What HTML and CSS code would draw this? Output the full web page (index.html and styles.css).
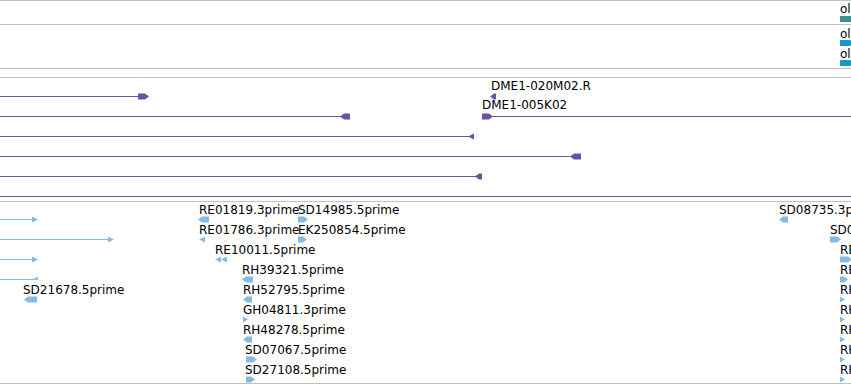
FILE: index.html
```html
<!DOCTYPE html>
<html lang="en">
  <head>
    <meta charset="UTF-8" />
    <meta name="viewport" content="width=device-width, initial-scale=1.0" />
    <title>Tracks</title>
    <link rel="stylesheet" href="styles.css">
  </head>
  <body>
    <div class="track-panel">
      <div class="track track-oligo" id="track-oligo"></div>
      <div class="track track-oligo2" id="track-oligo2"></div>
      <div class="track track-spacer"></div>
      <div class="track track-bac" id="track-bac"></div>
      <div class="track track-est" id="track-est"></div>
    </div>

    <script>
      // Petites formes pour les glyphes (coordonnees locales a la piste)
      function boxR(x, y, w) {
        return `<polygon points="${x},${y - 3} ${x + w - 4},${y - 3} ${x + w},${y} ${x + w - 4},${y + 3} ${x},${y + 3}" />`;
      }
      function boxL(x, y, w) {
        return `<polygon points="${x},${y} ${x + 4},${y - 3} ${x + w},${y - 3} ${x + w},${y + 3} ${x + 4},${y + 3}" />`;
      }
      function triL(x, y, w) {
        return `<polygon points="${x},${y} ${x + w},${y - 3} ${x + w},${y + 3}" />`;
      }
      function triR(x, y, w) {
        return `<polygon points="${x},${y - 3} ${x + w},${y} ${x},${y + 3}" />`;
      }
      function line(x1, x2, y) {
        return `<line x1="${x1}" x2="${x2}" y1="${y}" y2="${y}" />`;
      }
      function lineR(x1, x2, y) {
        return line(x1, x2 - 3, y) + triR(x2 - 6, y, 6);
      }

      const tracks = [
        {
          id: "track-oligo",
          glyphs: [`<rect x="840" y="15" width="14" height="6" />`],
          labels: [{ text: "oligo_2631", x: 840, y: 1 }]
        },
        {
          id: "track-oligo2",
          glyphs: [boxR(840, 18, 14), boxR(840, 38, 14)],
          labels: [
            { text: "oligo_2632", x: 840, y: 2 },
            { text: "oligo_2633", x: 840, y: 22 }
          ]
        },
        {
          id: "track-bac",
          glyphs: [
            line(0, 139, 18.5), boxR(138, 18.5, 11),
            line(0, 341, 38.5), boxL(340, 38.5, 10),
            boxL(490, 18.5, 6),
            boxR(482, 38.5, 11), line(492, 851, 38.5),
            line(0, 470, 58.5), triL(468, 58.5, 6),
            line(0, 572, 78.5), boxL(570, 78.5, 11),
            line(0, 476, 98.5), boxL(475, 98.5, 7),
            line(0, 851, 118.5)
          ],
          labels: [
            { text: "DME1-020M02.R", x: 491, y: 1 },
            { text: "DME1-005K02", x: 482, y: 20 }
          ]
        },
        {
          id: "track-est",
          glyphs: [
            lineR(0, 38, 17.5),
            lineR(0, 114, 37.5),
            lineR(0, 38, 57.5),
            line(0, 36, 77.5),
            `<polygon points="33,77.5 38,74.5 38,78" />`,
            boxL(198, 17.5, 11),
            triL(199, 37.5, 6),
            triL(215, 57.5, 6), triL(221, 57.5, 6),
            boxR(298, 17.5, 10),
            boxR(298, 37.5, 9),
            boxL(779, 17.5, 9),
            boxR(830, 37.5, 11),
            boxR(840, 57.5, 12),
            boxR(840, 77.5, 8),
            triR(840, 97.5, 5), triR(840, 117.5, 5), triR(840, 137.5, 5),
            triR(840, 157.5, 5), triR(840, 177.5, 5),
            boxL(242, 77.5, 11),
            boxL(24, 97.5, 13),
            boxL(243, 97.5, 9),
            triR(243, 117.5, 5),
            boxL(243, 137.5, 9),
            boxR(246, 157.5, 11),
            boxR(246, 177.5, 9)
          ],
          labels: [
            { text: "RE01819.3prime", x: 199, y: 1 },
            { text: "SD14985.5prime", x: 298, y: 1 },
            { text: "SD08735.3prime", x: 779, y: 1 },
            { text: "RE01786.3prime", x: 199, y: 21 },
            { text: "EK250854.5prime", x: 298, y: 21 },
            { text: "SD05521.5prime", x: 830, y: 21 },
            { text: "RE10011.5prime", x: 215, y: 41 },
            { text: "RE27264.5prime", x: 840, y: 41 },
            { text: "RH39321.5prime", x: 242, y: 61 },
            { text: "RE63802.5prime", x: 840, y: 61 },
            { text: "SD21678.5prime", x: 23, y: 81 },
            { text: "RH52795.5prime", x: 243, y: 81 },
            { text: "RH43511.5prime", x: 840, y: 81 },
            { text: "GH04811.3prime", x: 243, y: 101 },
            { text: "RH01732.5prime", x: 840, y: 101 },
            { text: "RH48278.5prime", x: 243, y: 121 },
            { text: "RH27019.5prime", x: 840, y: 121 },
            { text: "SD07067.5prime", x: 245, y: 141 },
            { text: "RH62118.5prime", x: 840, y: 141 },
            { text: "SD27108.5prime", x: 245, y: 161 },
            { text: "RH12960.5prime", x: 840, y: 161 }
          ]
        }
      ];

      tracks.forEach((track) => {
        const el = document.getElementById(track.id);
        let html = `<svg class="glyphs" width="851" height="${el.clientHeight}">${track.glyphs.join("")}</svg>`;
        track.labels.forEach((label) => {
          html += `<span class="feature-label" style="left:${label.x}px;top:${label.y}px">${label.text}</span>`;
        });
        el.innerHTML = html;
      });
    </script>
  </body>
</html>
```

FILE: styles.css
```css
* {
  margin: 0;
  padding: 0;
  box-sizing: border-box;
}

body {
  font-family: "DejaVu Sans", Verdana, sans-serif;
  font-size: 12px;
  background-color: #ffffff;
  color: #000000;
  width: 851px;
  height: 385px;
  overflow: hidden;
}

.track-panel {
  display: flex;
  flex-direction: column;
  width: 851px;
}

.track {
  position: relative;
  overflow: hidden;
  border-top: 1px solid #c3c3c3;
}

.track-oligo {
  height: 24px;
}

.track-oligo2 {
  height: 44px;
}

.track-spacer {
  height: 9px;
}

.track-bac {
  height: 124px;
}

.track-est {
  height: 183px;
  border-bottom: 1px solid #c3c3c3;
}

.glyphs {
  position: absolute;
  top: 0;
  left: 0;
  display: block;
}

.track-oligo .glyphs {
  fill: #3b8f8f;
}

.track-oligo2 .glyphs {
  fill: #169bc2;
}

.track-bac .glyphs {
  fill: #6c52a5;
  stroke: none;
}

.track-bac .glyphs line {
  stroke: #6c52a5;
  stroke-width: 1;
}

.track-est .glyphs {
  fill: #84bbe1;
}

.track-est .glyphs line {
  stroke: #84bbe1;
  stroke-width: 1;
}

.feature-label {
  position: absolute;
  line-height: 14px;
  white-space: nowrap;
}
```
